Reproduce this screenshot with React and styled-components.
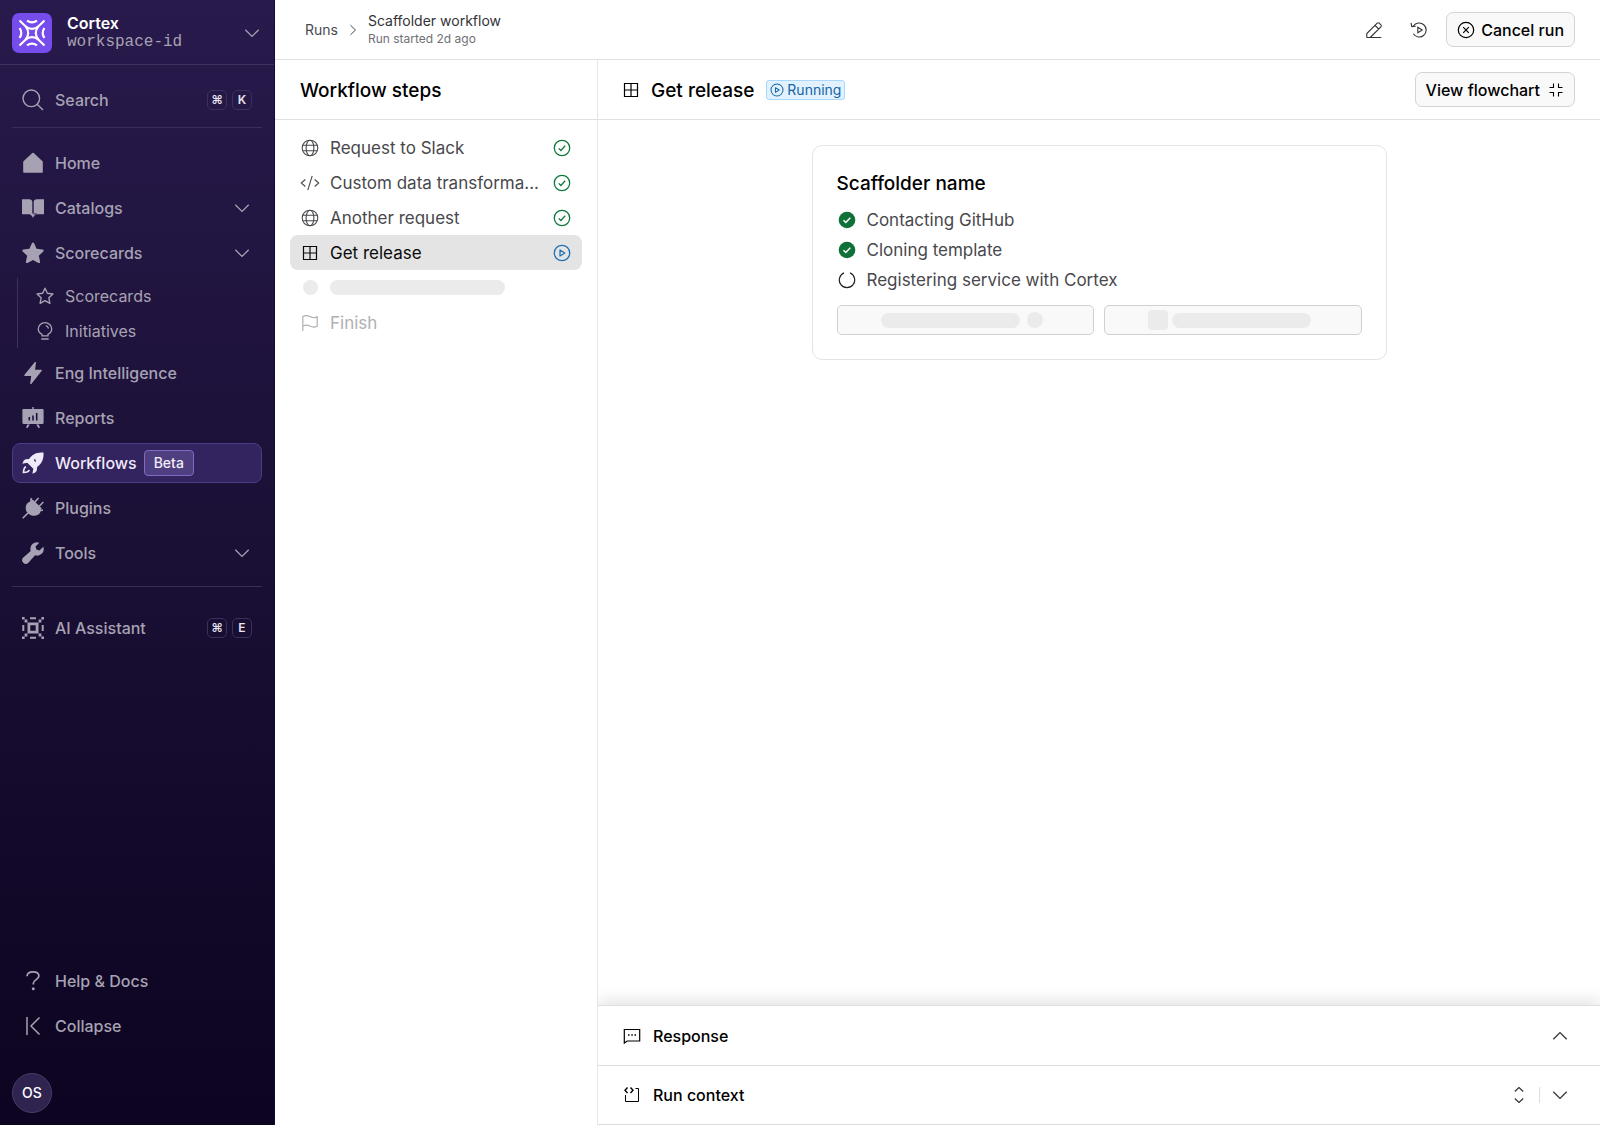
import React, { useState } from 'react';
import styled, { createGlobalStyle, css } from 'styled-components';

const GlobalStyle = createGlobalStyle`
  *, *::before, *::after {
    box-sizing: border-box;
  }
  body {
    margin: 0;
    background: #fff;
    color: #000;
    font-family: Inter, "Liberation Sans", sans-serif;
    font-size: 16px;
    line-height: 20px;
  }
  button {
    font: inherit;
    color: inherit;
    background: none;
    border: none;
    padding: 0;
    cursor: pointer;
  }
  a {
    color: inherit;
    text-decoration: none;
  }
  h1, h2, ul, ol, p {
    margin: 0;
    padding: 0;
  }
  ul, ol {
    list-style: none;
  }
  svg {
    display: block;
    flex-shrink: 0;
  }
`;

/* icons */

const Line = ({ size = 22, box = size, width = 1.2, children }) => (
  <svg
    width={size}
    height={size}
    viewBox={`0 0 ${box} ${box}`}
    fill='none'
    stroke='currentColor'
    strokeWidth={width}
    aria-hidden='true'
  >
    {children}
  </svg>
);

const Solid = ({ size = 22, children }) => (
  <svg
    width={size}
    height={size}
    viewBox='0 0 22 22'
    fill='currentColor'
    aria-hidden='true'
  >
    {children}
  </svg>
);

const LogoIcon = () => (
  <svg
    width='40'
    height='40'
    viewBox='0 0 40 40'
    fill='none'
    stroke='#fff'
    strokeWidth='2.2'
    aria-hidden='true'
  >
    <rect width='40' height='40' rx='7' fill='#774cec' stroke='none' />
    <path d='M7.5 7.5 13.5 13.2Q16.2 15.8 20 15.8T26.5 13.2L32.5 7.5' />
    <path d='M7.5 32.5 13.5 26.8Q16.2 24.2 20 24.2T26.5 26.8L32.5 32.5' />
    <path d='M13.5 13.2Q16.2 16.2 16.2 20T13.5 26.8M26.5 13.2Q23.8 16.2 23.8 20T26.5 26.8' />
    <path d='M15 7.6Q20 11 25 7.6M15 32.4Q20 29 25 32.4M7.6 15Q11 20 7.6 25M32.4 15Q29 20 32.4 25' />
  </svg>
);

const ChevronDown = () => (
  <Line size={16} width={1.3}>
    <path d='m1.3 4.8 6.7 6.6 6.7-6.6' />
  </Line>
);

const ChevronUp = () => (
  <Line size={16} width={1.3}>
    <path d='m1.3 11.2 6.7-6.6 6.7 6.6' />
  </Line>
);

const ChevronRight = () => (
  <Line size={12} width={1}>
    <path d='m3.5 1.2 5 4.8-5 4.8' />
  </Line>
);

const SearchIcon = () => (
  <Line width={1.4}>
    <circle cx='9.3' cy='9.3' r='8.3' />
    <path d='m15.2 15.2 5.8 5.8' />
  </Line>
);

const HomeIcon = () => (
  <Solid>
    <path d='M11 .8a1 1 0 0 1 .7.3l8.8 8.1a1 1 0 0 1 .3.7V20a.8.8 0 0 1-.8.8H2a.8.8 0 0 1-.8-.8V9.9a1 1 0 0 1 .3-.7l8.8-8.1a1 1 0 0 1 .7-.3Z' />
  </Solid>
);

const BookIcon = () => (
  <Solid>
    <path d='M.4 2.2h7.2q2.5.2 2.7 2.3v13.2q-.5-.5-1.5-.5H.4a.5.5 0 0 1-.5-.5V2.7a.5.5 0 0 1 .5-.5ZM21.6 2.2h-7.2q-2.5.2-2.7 2.3v13.2q.5-.5 1.5-.5h8.4a.5.5 0 0 0 .5-.5V2.7a.5.5 0 0 0-.5-.5ZM7 16.500h8l-2 1.700q-1.300.3-1.600 2.300h-.8q-.3-2-1.600-2.300Z' />
  </Solid>
);

const StarIcon = () => (
  <Solid>
    <path d='M11 .5c.5 0 .9.3 1.1.8l2.5 5.5 6 .7c1.100.1 1.500 1.300.7 2.100l-4.500 4.100 1.300 6c.2 1-.8 1.700-1.700 1.200L11 17.900l-5.400 3c-.9.5-1.900-.2-1.700-1.200l1.300-6L.7 9.600C-.1 8.800.3 7.600 1.400 7.500l6-.7L9.900 1.300c.2-.5.6-.8 1.100-.8Z' />
  </Solid>
);

const StarOutlineIcon = () => (
  <Line size={18} box={22} width={1.7}>
    <path
      d='m11 1.5 2.9 6.2 6.8.8-5 4.7 1.3 6.7-6-3.3-6 3.3 1.3-6.7-5-4.7 6.8-.8Z'
      strokeLinejoin='round'
    />
  </Line>
);

const BulbIcon = () => (
  <Line size={18} width={1.3}>
    <path d='M6 13.800v-1.500C4 11.300 2.300 9.600 2.300 7a6.700 6.300 0 0 1 13.400 0c0 2.600-1.700 4.300-3.700 5.300v1.500ZM5.300 17h7.400M9.800 3.600Q12 4.200 12.500 6.500' />
  </Line>
);

const BoltIcon = () => (
  <Solid>
    <path d='M13.400-.6q.6-.2.6.5L13.100 7.800h6q1.200.2.5 1.200L8.900 22.500q-.9.8-.8-.4L9.200 14H3q-1.200-.2-.5-1.200Z' />
  </Solid>
);

const ReportsIcon = () => (
  <Solid>
    <path
      fillRule='evenodd'
      d='M10.300 0h1.400v2h8.800c.7 0 1.100.4 1.100 1.100v12.700c0 .7-.4 1.100-1.100 1.100H1.500c-.7 0-1.100-.4-1.100-1.100V3.100C.4 2.400.8 2 1.500 2h8.800ZM6.500 10v3.500h1.600V10Zm3.700-1.500v5h1.600v-5Zm3.700-2.500v7.500h1.600V6ZM5.200 17.500h2.600l-2.300 3.700-1.400-.7ZM16.800 17.500h-2.600l2.300 3.700 1.400-.7Z'
    />
  </Solid>
);

const RocketIcon = () => (
  <Solid>
    <path
      fillRule='evenodd'
      d='M21.500.6C14-.1 9.800 3 7.200 6.900L3.500 7.300Q1.300 8 .4 11.700l4.900-.9 6 6-.9 4.900q3.700-.9 4.300-3l.5-3.900C19 12.200 22 8 21.500.6ZM11.900 8l1.200-1.200.9 2.400-.9.9Z'
    />
    <path
      d='M4 14.700q-2.400 1-2.500 5.800 4.900-.1 5.800-2.500'
      fill='none'
      stroke='currentColor'
      strokeWidth='1.700'
    />
  </Solid>
);

const PlugIcon = () => (
  <Solid>
    <path d='M11.200 2.900 19.400 11q.5.7-.1 1.300l-.8.7q.3 3.200-2 4.500-2.800 1.700-6.300 1.200l-2.700-1.200-3-3q-1.200-2.500-.6-5.300Q4.600 6 8.400 4.600l1.500-1.700q.6-.5 1.300 0Z' />
    <path
      d='M.7 21.300 6.500 15.500M13 4.900 16.600 1M17.200 9.200 21.300 5M8.600 4.800 9.500 1M18 13.800l3-.8'
      stroke='currentColor'
      strokeWidth='1.600'
    />
  </Solid>
);

const WrenchIcon = () => (
  <Solid>
    <path d='M17.300.7a6.600 6.600 0 0 0-8.600 8.200L1.300 15.600a3.600 3.600 0 1 0 5.100 5.100l6.700-7.400a6.600 6.600 0 0 0 8.200-8.600l-3.900 3.800-3-.9-.9-3Z' />
  </Solid>
);

const AssistantIcon = () => (
  <Solid>
    <path
      fillRule='evenodd'
      d='M5.500 5.500h11v11h-11ZM8.300 8.300v5.400h5.400V8.300ZM8 .3h6v2H8ZM8 19.700h6v2H8ZM.3 8h2v6h-2ZM19.700 8h2v6h-2ZM0 0h2.600v2.600H0ZM2.600 2.600h2.800v2.800H2.600ZM19.400 0H22v2.600h-2.600ZM16.600 2.600h2.800v2.800h-2.800ZM0 19.400h2.600V22H0ZM2.600 16.600h2.800v2.800H2.600ZM19.400 19.400H22V22h-2.600ZM16.600 16.600h2.800v2.800h-2.800Z'
    />
  </Solid>
);

const HelpIcon = () => (
  <Line width={1.7}>
    <path d='M5 6.200c.2-3 2.600-4.400 6-4.400s5.900 1.500 5.900 4.300c0 3.700-5.600 3.400-5.600 7.500v.9' />
    <circle cx='11.300' cy='18.700' r='1.500' fill='currentColor' stroke='none' />
  </Line>
);

const CollapseIcon = () => (
  <Line width={1.5}>
    <path d='M5 2v18M17.500 2.500 9 11l8.500 8.500' />
  </Line>
);

const GlobeIcon = () => (
  <Line size={18} width={1.1}>
    <circle cx='9' cy='9' r='7.800' />
    <ellipse cx='9' cy='9' rx='3.900' ry='7.800' />
    <path d='M2 6.200h14M2 11.800h14' />
  </Line>
);

const CodeIcon = () => (
  <Line size={20} width={1.1}>
    <path d='M5.300 6.500 1.300 10l4 3.500M14.700 6.500l4 3.500-4 3.500M12.200 2.800 7.800 17.200' />
  </Line>
);

const GridIcon = () => (
  <Line size={16} width={1.2}>
    <path d='M1.500 1.500h13v13h-13ZM8 1.500v13M1.500 8h13' />
  </Line>
);

const FlagIcon = () => (
  <Line size={18} width={1.2}>
    <path d='M1.800 17V2.500q3.500-2 7.200.1t7.200.3v9.200q-3.500 1.900-7.200-.1t-7.200.1' />
  </Line>
);

const CheckCircleIcon = () => (
  <Line size={18} width={1.3}>
    <circle cx='9' cy='9' r='7.700' />
    <path d='m5.700 9.400 2.200 2.100 4.300-4.700' />
  </Line>
);

const PlayCircleIcon = ({ size = 18 }) => (
  <Line size={size} box={18} width={1.3}>
    <circle cx='9' cy='9' r='7.700' />
    <path d='M7 6v6l4.800-3Z' strokeLinejoin='round' />
  </Line>
);

const CheckSolidIcon = () => (
  <svg width='18' height='18' viewBox='0 0 18 18' fill='none' aria-hidden='true'>
    <circle cx='9' cy='9' r='8.300' fill='#0f7138' />
    <path d='m5.500 9.300 2.300 2.200 4.500-4.700' stroke='#fff' strokeWidth='1.500' />
  </svg>
);

const SpinnerIcon = () => (
  <Line size={18} width={1.2}>
    <path d='M12 1.900A7.700 7.700 0 1 1 6 1.900' />
  </Line>
);

const PenIcon = () => (
  <Line size={18} width={1.1}>
    <path d='M1.800 16.500v-3.900L12.200 2.100a1.400 1.400 0 0 1 2 0l1.700 1.700a1.400 1.400 0 0 1 0 2L5.200 16.500M1.500 16.500h14.800M10 4.300l3.700 3.700' />
  </Line>
);

const HistoryIcon = () => (
  <Line size={18} width={1.1}>
    <path d='M3.300 5.200A7 7 0 1 1 3.300 12.800' />
    <path d='M1 1.800l.8 3.800 3.900-.4M7.800 6.300v5.400L12.200 9Z' />
  </Line>
);

const CancelIcon = () => (
  <Line size={18} width={1.2}>
    <circle cx='9' cy='9' r='7.700' />
    <path d='m6.200 6.200 5.600 5.600M11.800 6.200l-5.600 5.600' />
  </Line>
);

const ShrinkIcon = () => (
  <Line size={16} width={1.1}>
    <path d='M1.500 5.500h4V1.500M14.500 5.500h-4V1.500M1.500 10.500h4v4M14.500 10.500h-4v4' />
  </Line>
);

const MessageIcon = () => (
  <Line size={18} width={1.2}>
    <path d='M1.300 16V2.500h15.400V14H4.200Z' />
    <path d='M5 8h1.500M8.300 8h1.500M11.500 8H13' strokeWidth='1.600' />
  </Line>
);

const ContextIcon = () => (
  <Line size={18} width={1}>
    <path d='M2.500 9v6.500h13v-13h-3' />
    <path d='M4.500 1.500 2 4.200l2.500 2.700M7.500 1.500 10 4.200 7.500 6.900' strokeWidth='1.400' />
  </Line>
);

const SortIcon = () => (
  <Line size={16} width={1.2}>
    <path d='m3.800 4.500 4.200-4 4.200 4M3.800 11.500l4.200 4 4.200-4' />
  </Line>
);

/* data */

const mainNav = [
  { label: 'Home', icon: <HomeIcon /> },
  { label: 'Catalogs', icon: <BookIcon />, group: true },
  {
    label: 'Scorecards',
    icon: <StarIcon />,
    group: true,
    children: [
      { label: 'Scorecards', icon: <StarOutlineIcon /> },
      { label: 'Initiatives', icon: <BulbIcon /> },
    ],
  },
  { label: 'Eng Intelligence', icon: <BoltIcon /> },
  { label: 'Reports', icon: <ReportsIcon /> },
  { label: 'Workflows', icon: <RocketIcon />, tag: 'Beta', active: true },
  { label: 'Plugins', icon: <PlugIcon /> },
  { label: 'Tools', icon: <WrenchIcon />, group: true },
];

const steps = [
  { id: 'slack', label: 'Request to Slack', icon: <GlobeIcon />, status: 'done' },
  { id: 'transform', label: 'Custom data transforma...', icon: <CodeIcon />, status: 'done' },
  { id: 'request', label: 'Another request', icon: <GlobeIcon />, status: 'done' },
  { id: 'release', label: 'Get release', icon: <GridIcon />, status: 'running' },
];

const tasks = [
  { label: 'Contacting GitHub', done: true },
  { label: 'Cloning template', done: true },
  { label: 'Registering service with Cortex', done: false },
];

const NavItem = ({ item }) => (
  <li>
    <NavRow
      as={item.group ? 'button' : 'a'}
      href={item.group ? undefined : '#'}
      $active={item.active}
    >
      <IconSlot $size={22}>{item.icon}</IconSlot>
      <span>{item.label}</span>
      {item.tag && <Tag>{item.tag}</Tag>}
      {item.group && (
        <RowEnd>
          <ChevronDown />
        </RowEnd>
      )}
    </NavRow>
    {item.children && (
      <SubNav>
        {item.children.map((child) => (
          <li key={child.label}>
            <SubRow href='#'>
              {child.icon}
              {child.label}
            </SubRow>
          </li>
        ))}
      </SubNav>
    )}
  </li>
);

const Sidebar = () => (
  <Aside>
    <Workspace>
      <LogoIcon />
      <WorkspaceText>
        <strong>Cortex</strong>
        <code>workspace-id</code>
      </WorkspaceText>
      <ChevronDown />
    </Workspace>
    <NavSection>
      <NavRow as='button'>
        <IconSlot $size={22}>
          <SearchIcon />
        </IconSlot>
        <span>Search</span>
        <RowEnd>
          <Key>⌘</Key>
          <Key>K</Key>
        </RowEnd>
      </NavRow>
    </NavSection>
    <Divider />
    <NavSection as='nav'>
      <NavList>
        {mainNav.map((item) => (
          <NavItem key={item.label} item={item} />
        ))}
      </NavList>
    </NavSection>
    <Divider $wide />
    <NavSection $wide>
      <NavRow as='button'>
        <IconSlot $size={22}>
          <AssistantIcon />
        </IconSlot>
        <span>AI Assistant</span>
        <RowEnd>
          <Key>⌘</Key>
          <Key>E</Key>
        </RowEnd>
      </NavRow>
    </NavSection>
    <SidebarFoot>
      <NavRow href='#'>
        <IconSlot $size={22}>
          <HelpIcon />
        </IconSlot>
        <span>Help &amp; Docs</span>
      </NavRow>
      <NavRow as='button'>
        <IconSlot $size={22}>
          <CollapseIcon />
        </IconSlot>
        <span>Collapse</span>
      </NavRow>
      <Avatar>OS</Avatar>
    </SidebarFoot>
  </Aside>
);

const App = () => {
  const [current, setCurrent] = useState('release');

  return (
    <>
      <GlobalStyle />
      <Page>
        <Sidebar />
        <Main>
          <TopBar>
            <Crumbs aria-label='Breadcrumb'>
              <a href='#'>Runs</a>
              <ChevronRight />
              <CrumbText>
                <span>Scaffolder workflow</span>
                <small>Run started 2d ago</small>
              </CrumbText>
            </Crumbs>
            <Actions>
              <IconButton aria-label='Edit'>
                <PenIcon />
              </IconButton>
              <IconButton aria-label='Run history'>
                <HistoryIcon />
              </IconButton>
              <Button>
                <CancelIcon />
                Cancel run
              </Button>
            </Actions>
          </TopBar>
          <Columns>
            <StepsPanel>
              <PanelHeader>
                <Title>Workflow steps</Title>
              </PanelHeader>
              <StepList>
                {steps.map(({ id, label, icon, status }) => (
                  <li key={id}>
                    <StepRow
                      $active={id === current}
                      onClick={() => setCurrent(id)}
                    >
                      <IconSlot $size={20}>{icon}</IconSlot>
                      <StepLabel>{label}</StepLabel>
                      <Status $status={status}>
                        {status === 'done' ? <CheckCircleIcon /> : <PlayCircleIcon />}
                      </Status>
                    </StepRow>
                  </li>
                ))}
                <li>
                  <StepPlaceholder>
                    <IconSlot $size={20}>
                      <Bone $width={15} />
                    </IconSlot>
                    <Bone $width={175} />
                  </StepPlaceholder>
                </li>
                <li>
                  <StepRow disabled>
                    <IconSlot $size={20}>
                      <FlagIcon />
                    </IconSlot>
                    <StepLabel>Finish</StepLabel>
                  </StepRow>
                </li>
              </StepList>
            </StepsPanel>
            <Detail>
              <PanelHeader>
                <GridIcon />
                <Title>Get release</Title>
                <Badge>
                  <PlayCircleIcon size={14} />
                  Running
                </Badge>
                <Button $end>
                  View flowchart
                  <ShrinkIcon />
                </Button>
              </PanelHeader>
              <Canvas>
                <Card>
                  <Title>Scaffolder name</Title>
                  <TaskList>
                    {tasks.map(({ label, done }) => (
                      <li key={label}>
                        {done ? <CheckSolidIcon /> : <SpinnerIcon />}
                        {label}
                      </li>
                    ))}
                  </TaskList>
                  <Loading>
                    <LoadingBox $gap={7}>
                      <Bone $width={139} />
                      <Bone $width={16} $height={16} />
                    </LoadingBox>
                    <LoadingBox $gap={4}>
                      <Bone $width={20} $height={20} $radius={4} />
                      <Bone $width={139} />
                    </LoadingBox>
                  </Loading>
                </Card>
              </Canvas>
              <Drawers>
                <Drawer>
                  <MessageIcon />
                  <span>Response</span>
                  <DrawerButton aria-label='Expand response'>
                    <ChevronUp />
                  </DrawerButton>
                </Drawer>
                <Drawer>
                  <ContextIcon />
                  <span>Run context</span>
                  <DrawerButton aria-label='Resize run context'>
                    <SortIcon />
                  </DrawerButton>
                  <Separator />
                  <DrawerButton aria-label='Collapse run context'>
                    <ChevronDown />
                  </DrawerButton>
                </Drawer>
              </Drawers>
            </Detail>
          </Columns>
        </Main>
      </Page>
    </>
  );
};

const Page = styled.div`
  display: flex;
  min-height: 100vh;
`;

const Aside = styled.aside`
  display: flex;
  flex-direction: column;
  width: 275px;
  flex-shrink: 0;
  border-right: 1px solid #140a38;
  background: linear-gradient(#281a4c, #1c1138 42%, #0c0420);
  color: #a7a2b3;
`;

const Workspace = styled.button`
  display: flex;
  align-items: center;
  gap: 15px;
  width: 100%;
  height: 65px;
  padding: 1px 14px 0 12px;
  border-bottom: 1px solid #3e3160;
  text-align: left;
  > :last-child {
    margin-left: auto;
  }
`;

const WorkspaceText = styled.span`
  display: flex;
  flex-direction: column;
  strong {
    color: #fff;
    font-size: 16px;
    font-weight: 600;
    line-height: 20px;
  }
  code {
    font-family: "Liberation Mono", monospace;
    font-size: 16px;
    line-height: 19px;
  }
`;

const NavSection = styled.div`
  padding: ${({ $wide }) => ($wide ? '21px' : '15px')} 12px 0;
`;

const NavList = styled.ul`
  display: flex;
  flex-direction: column;
  gap: 5px;
`;

const Divider = styled.hr`
  margin: ${({ $wide }) => ($wide ? '13px' : '7px')} 12px 0;
  border: none;
  border-top: 1px solid #3a2e58;
`;

const NavRow = styled.a`
  display: flex;
  align-items: center;
  gap: 11px;
  width: 100%;
  height: 40px;
  padding: 0 9px;
  border: 1px solid transparent;
  border-radius: 8px;
  font-size: 16px;
  font-weight: 500;
  ${({ $active }) =>
    $active &&
    css`
      border-color: #4b3b83;
      background: #33235f;
      color: #efeaf8;
    `}
`;

const RowEnd = styled.span`
  display: flex;
  gap: 5px;
  margin-left: auto;
  > svg {
    margin-right: 2px;
  }
`;

const IconSlot = styled.span`
  display: flex;
  align-items: center;
  justify-content: center;
  flex-shrink: 0;
  width: ${({ $size }) => $size}px;
`;

const Key = styled.kbd`
  display: flex;
  align-items: center;
  justify-content: center;
  width: 20px;
  height: 20px;
  border: 1px solid #3b2f5b;
  border-radius: 5px;
  color: #e8e5ee;
  font-family: inherit;
  font-size: 12px;
  font-weight: 600;
`;

const Tag = styled.span`
  margin-left: -4px;
  padding: 2px 9px;
  border: 1px solid #8169c4;
  border-radius: 4px;
  background: #503f80;
  color: #f1edf9;
  font-size: 14px;
`;

const SubNav = styled.ul`
  margin: 5px 0 0 5px;
  border-left: 1px solid #3d3259;
`;

const SubRow = styled.a`
  display: flex;
  align-items: center;
  gap: 11px;
  height: 35px;
  padding-left: 18px;
  font-size: 16px;
`;

const SidebarFoot = styled.div`
  display: flex;
  flex-direction: column;
  gap: 5px;
  margin-top: auto;
  padding: 20px 12px 12px;
`;

const Avatar = styled.button`
  width: 40px;
  height: 40px;
  margin-top: 22px;
  border: 1px solid #483d69;
  border-radius: 50%;
  background: #2f2450;
  color: #fff;
  font-size: 14px;
  font-weight: 500;
`;

const Main = styled.main`
  display: flex;
  flex-direction: column;
  flex: 1;
  min-width: 0;
`;

const TopBar = styled.header`
  display: flex;
  align-items: center;
  justify-content: space-between;
  height: 60px;
  padding: 0 25px 0 30px;
  border-bottom: 1px solid #e0e0e0;
`;

const Crumbs = styled.nav`
  display: flex;
  align-items: center;
  gap: 9px;
  color: #4a4a4f;
  font-size: 14px;
`;

const CrumbText = styled.div`
  display: flex;
  flex-direction: column;
  span {
    color: #333338;
    font-size: 14px;
    line-height: 18px;
  }
  small {
    color: #707075;
    font-size: 12px;
    line-height: 18px;
  }
`;

const Actions = styled.div`
  display: flex;
  align-items: center;
  gap: 10px;
`;

const IconButton = styled.button`
  display: flex;
  align-items: center;
  justify-content: center;
  width: 35px;
  height: 35px;
  color: #333338;
`;

const Button = styled.button`
  display: flex;
  align-items: center;
  gap: ${({ $end }) => ($end ? '8px' : '6px')};
  height: 35px;
  padding: 0 10px;
  margin-left: ${({ $end }) => ($end ? 'auto' : '0')};
  border: 1px solid #d4d4d4;
  border-radius: 7px;
  background: #f9f9f9;
  font-size: 16px;
  font-weight: 500;
`;

const Columns = styled.div`
  display: flex;
  flex: 1;
`;

const StepsPanel = styled.section`
  width: 323px;
  flex-shrink: 0;
  border-right: 1px solid #e6e6e6;
`;

const PanelHeader = styled.header`
  display: flex;
  align-items: center;
  gap: 12px;
  height: 60px;
  padding: 0 25px;
  border-bottom: 1px solid #e0e0e0;
`;

const Title = styled.h2`
  padding-top: 2px;
  font-size: 19px;
  font-weight: 500;
  line-height: 24px;
`;

const StepList = styled.ol`
  padding: 10px 15px;
`;

const StepRow = styled.button`
  display: flex;
  align-items: center;
  gap: 10px;
  width: 100%;
  height: 35px;
  padding: 0 11px 0 10px;
  border-radius: 8px;
  background: ${({ $active }) => ($active ? '#e4e4e4' : 'none')};
  color: ${({ $active }) => ($active ? '#0a0a0a' : '#48484d')};
  text-align: left;
  &:disabled {
    color: #b0b0b3;
    cursor: default;
  }
`;

const StepLabel = styled.span`
  flex: 1;
  min-width: 0;
  font-size: 17px;
  white-space: nowrap;
`;

const Status = styled.span`
  color: ${({ $status }) => ($status === 'done' ? '#107a3c' : '#2271b3')};
`;

const StepPlaceholder = styled.div`
  display: flex;
  align-items: center;
  gap: 10px;
  height: 35px;
  padding: 0 10px;
`;

const Bone = styled.span`
  width: ${({ $width }) => $width}px;
  height: ${({ $height = 15 }) => $height}px;
  border-radius: ${({ $radius = 8 }) => $radius}px;
  background: #ebebeb;
`;

const Detail = styled.section`
  display: flex;
  flex-direction: column;
  flex: 1;
  min-width: 0;
`;

const Badge = styled.span`
  display: flex;
  align-items: center;
  gap: 3px;
  height: 20px;
  padding: 0 3px;
  border: 1px solid #a9d8fa;
  border-radius: 3px;
  background: #e1f2fe;
  color: #1565a6;
  font-size: 14px;
`;

const Canvas = styled.div`
  display: flex;
  flex: 1;
  align-items: flex-start;
  justify-content: center;
  padding: 25px;
`;

const Card = styled.article`
  width: 100%;
  max-width: 575px;
  padding: 24px;
  border: 1px solid #e4e4e4;
  border-radius: 10px;
`;

const TaskList = styled.ul`
  margin-top: 9px;
  li {
    display: flex;
    align-items: center;
    gap: 11px;
    height: 30px;
    padding-left: 1px;
    color: #48484d;
    font-size: 17px;
  }
  svg {
    color: #222;
  }
`;

const Loading = styled.div`
  display: flex;
  gap: 10px;
  margin-top: 10px;
`;

const LoadingBox = styled.div`
  display: flex;
  align-items: center;
  justify-content: center;
  gap: ${({ $gap }) => $gap}px;
  flex: 1;
  height: 30px;
  padding-right: 6px;
  border: 1px solid #d0d0d0;
  border-radius: 5px;
  background: #f9f9f9;
`;

const Drawers = styled.div`
  border-bottom: 1px solid #dcdcdc;
  box-shadow: 0 -4px 16px rgba(0, 0, 0, 0.12);
  clip-path: inset(-30px 0 0 0);
`;

const Drawer = styled.section`
  display: flex;
  align-items: center;
  gap: 12px;
  height: 60px;
  padding: 0 32px 0 25px;
  border-top: 1px solid #dedede;
  font-weight: 500;
  > span {
    margin-right: auto;
  }
  & + & {
    height: 59px;
  }
`;

const DrawerButton = styled.button`
  color: #333338;
`;

const Separator = styled.div`
  width: 1px;
  height: 16px;
  background: #dedede;
`;

export default App;
